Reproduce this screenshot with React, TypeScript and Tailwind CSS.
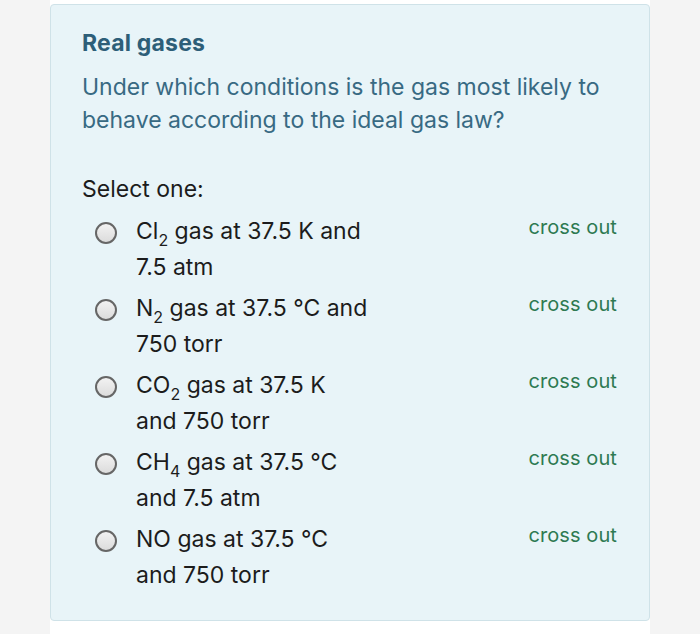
const options = [
  { pre: "Cl", sub: "2", rest: " gas at 37.5 K and", line2: "7.5 atm" },
  { pre: "N", sub: "2", rest: " gas at 37.5 °C and", line2: "750 torr" },
  { pre: "CO", sub: "2", rest: " gas at 37.5 K", line2: "and 750 torr" },
  { pre: "CH", sub: "4", rest: " gas at 37.5 °C", line2: "and 7.5 atm" },
  { pre: "NO", sub: "", rest: " gas at 37.5 °C", line2: "and 750 torr" },
];

export default function App() {
  return (
    <div className="flex h-[634px] w-[700px] justify-center bg-[#f4f4f4] font-['Inter',sans-serif]">
      <div className="w-[600px] bg-white pt-[4px]">
        <div className="h-[617px] rounded-[4px] border border-[#cfe2e8] bg-[#e8f4f8] pl-[31px] pr-[32px] pt-[24px]">
          <h2 className="text-[23px] font-bold leading-[28px] tracking-[0.2px] text-[#2d5e78]">Real gases</h2>
          <p className="mt-[14px] text-[23px] leading-[33px] text-[#386a83]">
            Under which conditions is the gas most likely to
            <br />
            behave according to the ideal gas law?
          </p>
          <div className="mt-[36px] text-[23px] leading-[33px] text-[#1c1c1c]">Select one:</div>
          <div className="mt-[13px] flex flex-col">
            {options.map((o, i) => (
              <div key={i} className="flex h-[77px] items-start">
                <div className="mt-[3px] ml-[13px] h-[22px] w-[22px] shrink-0 rounded-full border-2 border-[#666] bg-gradient-to-b from-[#f2f2f2] to-[#dcdcdc]" />
                <div className="ml-[19px] flex-1 text-[23px] leading-[36px] text-[#1c1c1c] -mt-[6px]">
                  <div>
                    {o.pre}
                    {o.sub && <sub className="text-[16px] align-[-3px] leading-none">{o.sub}</sub>}
                    {o.rest}
                  </div>
                  <div>{o.line2}</div>
                </div>
                <div className="-mt-[10px] text-[20px] leading-[36px] tracking-[0.1px] text-[#2e7a52]">cross out</div>
              </div>
            ))}
          </div>
        </div>
      </div>
    </div>
  );
}
